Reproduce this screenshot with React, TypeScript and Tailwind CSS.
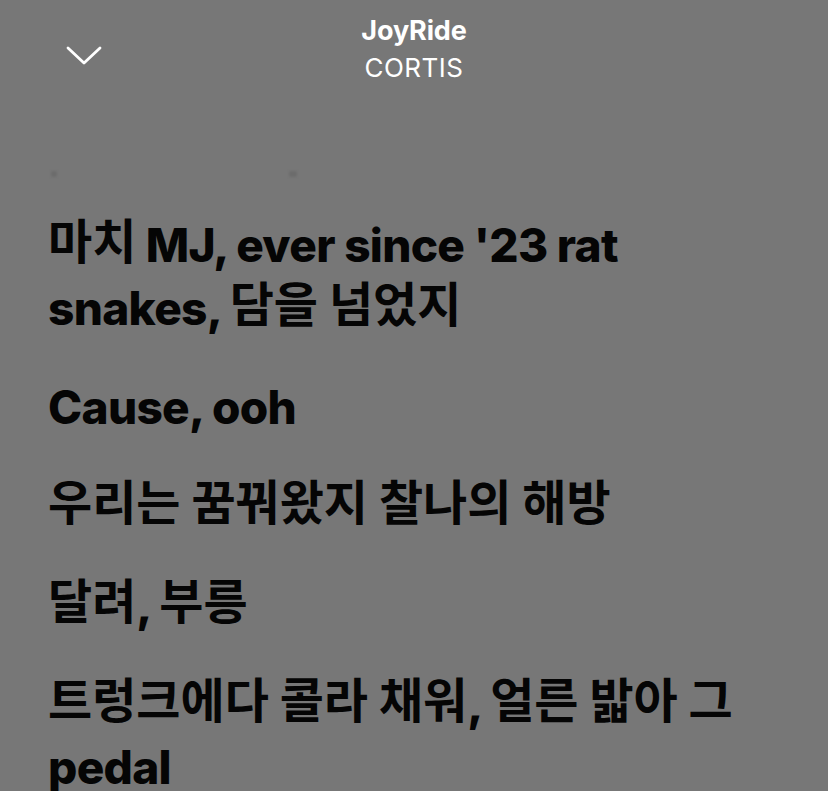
import React from "react";

const groups: string[] = [
  "마치 MJ, ever since '23 rat snakes, 담을 넘었지",
  "Cause, ooh",
  "우리는 꿈꿔왔지 찰나의 해방",
  "달려, 부릉",
  "트렁크에다 콜라 채워, 얼른 밟아 그 pedal",
];

const HANGUL = /([\uAC00-\uD7A3]+(?:\s+[\uAC00-\uD7A3]+)*)/;

function Lyric({ text }: { text: string }) {
  const parts = text.split(HANGUL).filter((p) => p.length > 0);
  return (
    <p className="text-[46px] font-extrabold leading-[63px] tracking-[-0.015em] text-[#050505]">
      {parts.map((p, i) =>
        HANGUL.test(p) ? (
          <span
            key={i}
            className="align-[3px] text-[48px] font-bold leading-none tracking-normal"
            style={{ fontFamily: "'Noto Sans CJK KR', sans-serif" }}
          >
            {p}
          </span>
        ) : (
          <React.Fragment key={i}>{p}</React.Fragment>
        )
      )}
    </p>
  );
}

export default function App() {
  return (
    <div
      className="h-[791px] w-full overflow-hidden bg-[#777777]"
      style={{ fontFamily: "Inter, 'Noto Sans CJK KR', sans-serif" }}
    >
      <header className="grid grid-cols-[1fr_auto_1fr] pt-[13px]">
        <div className="pl-[66px] pt-[33px]">
          <svg width="36" height="20" viewBox="0 0 36 20" fill="none">
            <polyline
              points="2,2 18,17 34,2"
              stroke="#ffffff"
              strokeWidth="2.8"
              strokeLinecap="round"
              strokeLinejoin="round"
            />
          </svg>
        </div>
        <div className="flex flex-col items-center text-white">
          <div className="text-[27px] font-bold leading-[36px] tracking-[-0.005em]">JoyRide</div>
          <div className="text-[26px] font-normal leading-[37px] tracking-[0.02em]">CORTIS</div>
        </div>
        <div />
      </header>

      <div className="mt-[85px] flex h-[7px] items-start">
        <div className="ml-[51px] h-[6px] w-[6px] rounded-[2px] bg-[#6c6c6c] blur-[1px]" />
        <div className="ml-[232px] h-[6px] w-[8px] rounded-[2px] bg-[#6c6c6c] blur-[1px]" />
      </div>

      <main className="mt-[36px] flex flex-col gap-[36px] px-[48px]">
        {groups.map((g) => (
          <Lyric key={g} text={g} />
        ))}
      </main>
    </div>
  );
}
